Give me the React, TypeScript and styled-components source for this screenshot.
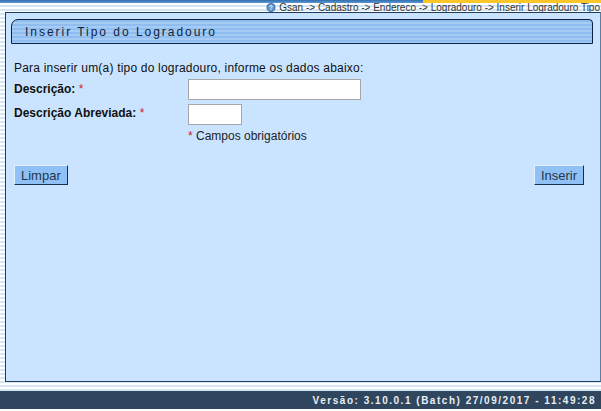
import React from "react";
import styled, { createGlobalStyle } from "styled-components";

const GlobalStyle = createGlobalStyle`
  html, body {
    margin: 0;
    padding: 0;
    background: #ffffff;
  }
  body {
    font-family: "Liberation Sans", Arial, sans-serif;
    font-size: 12px;
    color: #000000;
  }
`;

const Page = styled.div`
  width: 601px;
  height: 411px;
  display: flex;
  flex-direction: column;
  overflow: hidden;
`;

const TopStrip = styled.div`
  height: 3px;
  flex: none;
  display: flex;
`;

const TopStripBlue = styled.div`
  width: 423px;
  background: linear-gradient(#2f6fb0, #5f97cf);
`;

const TopStripYellow = styled.div`
  flex: 1;
  background: #fbc62a;
`;

const Striped = styled.div`
  flex: none;
  height: 388px;
  display: flex;
  flex-direction: column;
  background: repeating-linear-gradient(
    to bottom,
    #ffffff 0,
    #ffffff 2px,
    #d3e6f5 2px,
    #d3e6f5 4px
  );
`;

const Breadcrumb = styled.div`
  height: 9px;
  flex: none;
  display: flex;
  justify-content: flex-end;
  align-items: flex-start;
  gap: 3px;
  padding-right: 1px;
  font-size: 10px;
  line-height: 9px;
  color: #333333;
  white-space: nowrap;
`;

const HelpIcon = styled.svg`
  width: 10px;
  height: 9px;
  flex: none;
`;

const Panel = styled.main`
  margin-left: 5px;
  width: 596px;
  height: 370px;
  box-sizing: border-box;
  flex: none;
  background: #cae4ff;
  border: 1px solid #1f3d5c;
  border-right-color: #5d7e9e;
  padding: 6px 7px 0 5px;
  display: flex;
  flex-direction: column;
`;

const TitleBar = styled.header`
  height: 25px;
  box-sizing: border-box;
  flex: none;
  border: 1px solid #0d2440;
  border-radius: 7px 4px 0 0 / 7px 4px 0 0;
  background: repeating-linear-gradient(
    to bottom,
    #8fbdf0 0,
    #8fbdf0 2px,
    #a6ccf5 2px,
    #a6ccf5 4px
  );
  padding-left: 13px;
  display: flex;
  align-items: center;
`;

const Title = styled.h1`
  margin: 0;
  font-size: 12px;
  font-weight: normal;
  letter-spacing: 1.97px;
  color: #10243c;
`;

const Intro = styled.p`
  margin: 17px 0 0 3px;
  height: 14px;
  line-height: 14px;
  letter-spacing: 0.2px;
  color: #111111;
`;

const FormGrid = styled.div`
  margin: 4px 0 0 3px;
  display: grid;
  grid-template-columns: 174px 1fr;
  row-gap: 4px;
`;

const Label = styled.label<{ $top: number }>`
  font-weight: bold;
  line-height: 14px;
  padding-top: ${(p) => p.$top}px;
  color: #111111;
`;

const Star = styled.span`
  color: #cc2222;
  font-weight: normal;
`;

const TextInput = styled.input<{ $width: number }>`
  display: block;
  width: ${(p) => p.$width}px;
  height: 21px;
  box-sizing: border-box;
  border: 1px solid #a6a6a6;
  background: #ffffff;
  padding: 0 2px;
  margin: 0;
  outline: none;
`;

const Required = styled.div`
  grid-column: 2;
  line-height: 14px;
  color: #222222;
`;

const Actions = styled.div`
  margin: 22px 9px 0 3px;
  display: flex;
  justify-content: space-between;
`;

const Button = styled.button`
  height: 20px;
  box-sizing: border-box;
  padding: 0 6px;
  margin: 0;
  font-family: "Liberation Sans", Arial, sans-serif;
  font-size: 13px;
  line-height: 15px;
  color: #24364a;
  background: #8fc1f7;
  border: 1px solid;
  border-color: #e4f0fc #17304d #17304d #e4f0fc;
`;

const Footer = styled.footer`
  flex: none;
  height: 18px;
  background: #2f465e;
  color: #e8eef4;
  display: flex;
  align-items: center;
  justify-content: flex-end;
  padding-right: 5px;
  font-size: 10px;
  font-weight: bold;
  letter-spacing: 1.52px;
  white-space: nowrap;
`;

export default function App() {
  return (
    <Page>
      <GlobalStyle />
      <TopStrip>
        <TopStripBlue />
        <TopStripYellow />
      </TopStrip>
      <Striped>
        <Breadcrumb>
          <HelpIcon viewBox="0 0 10 10">
            <circle cx="5" cy="5" r="5" fill="#3f74b8" />
            <circle cx="5" cy="5" r="3.6" fill="#6f9ad0" />
            <path d="M3.6 4 C3.6 2.4 6.5 2.4 6.4 4 C6.3 5 5 5 5 6" fill="none" stroke="#fff" strokeWidth="1" />
            <rect x="4.5" y="6.8" width="1" height="1" fill="#fff" />
          </HelpIcon>
          <span>Gsan -&gt; Cadastro -&gt; Endereco -&gt; Logradouro -&gt; Inserir Logradouro Tipo</span>
        </Breadcrumb>
        <Panel>
          <TitleBar>
            <Title>Inserir Tipo do Logradouro</Title>
          </TitleBar>
          <Intro>Para inserir um(a) tipo do logradouro, informe os dados abaixo:</Intro>
          <FormGrid>
            <Label $top={3}>
              Descrição: <Star>*</Star>
            </Label>
            <TextInput $width={173} />
            <Label $top={2}>
              Descrição Abreviada: <Star>*</Star>
            </Label>
            <TextInput $width={54} />
            <Required>
              <Star>*</Star> Campos obrigatórios
            </Required>
          </FormGrid>
          <Actions>
            <Button>Limpar</Button>
            <Button>Inserir</Button>
          </Actions>
        </Panel>
      </Striped>
      <Footer>Versão: 3.10.0.1 (Batch) 27/09/2017 - 11:49:28</Footer>
    </Page>
  );
}
